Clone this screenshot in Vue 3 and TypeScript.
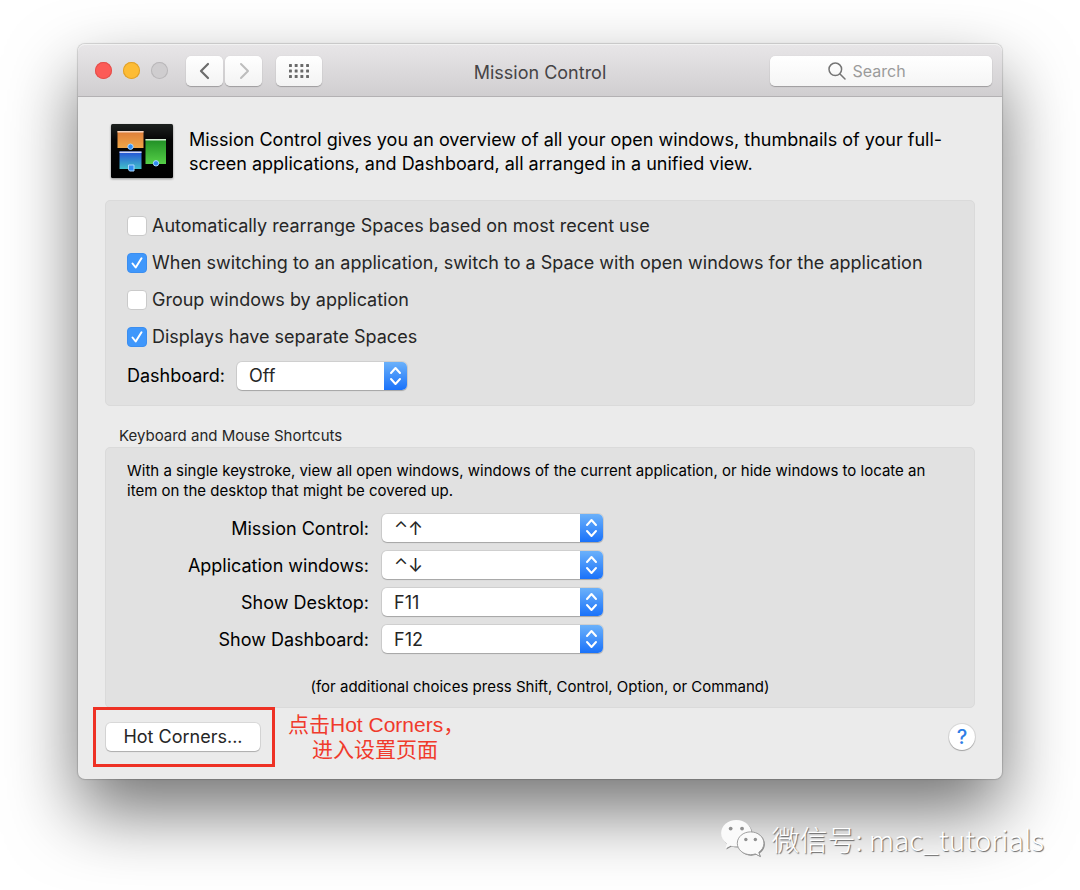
<script setup lang="ts">
import { reactive, ref } from 'vue'

interface Choice {
  id: string
  label: string
  checked: boolean
}

interface Shortcut {
  id: string
  label: string
  value: string
}

const choices = reactive<Choice[]>([
  { id: 'rearrange', label: 'Automatically rearrange Spaces based on most recent use', checked: false },
  { id: 'switching', label: 'When switching to an application, switch to a Space with open windows for the application', checked: true },
  { id: 'group', label: 'Group windows by application', checked: false },
  { id: 'displays', label: 'Displays have separate Spaces', checked: true },
])

const dashboard = ref('Off')
const dashboardModes = ['Off', 'As Space', 'As Overlay']

const shortcuts = reactive<Shortcut[]>([
  { id: 'mission', label: 'Mission Control:', value: '⌃↑' },
  { id: 'windows', label: 'Application windows:', value: '⌃↓' },
  { id: 'desktop', label: 'Show Desktop:', value: 'F11' },
  { id: 'show-dashboard', label: 'Show Dashboard:', value: 'F12' },
])
const keys = ['⌃↑', '⌃↓', 'F11', 'F12']

const query = ref('')
</script>

<template>
  <div class="desktop">
    <main class="window">
      <header class="titlebar">
        <div class="lights">
          <button class="light close" aria-label="Close"></button>
          <button class="light minimize" aria-label="Minimize"></button>
          <button class="light zoom" aria-label="Zoom" disabled></button>
        </div>
        <nav class="nav">
          <button class="tool" aria-label="Back">
            <svg width="12" height="18" viewBox="0 0 12 18"><path d="M9 2 2 9l7 7" fill="none" stroke="#6c6c6c" stroke-width="2.200" stroke-linecap="round" stroke-linejoin="round" /></svg>
          </button>
          <button class="tool" aria-label="Forward">
            <svg width="12" height="18" viewBox="0 0 12 18"><path d="m3 2 7 7-7 7" fill="none" stroke="#bdbdbd" stroke-width="2" stroke-linecap="round" stroke-linejoin="round" /></svg>
          </button>
        </nav>
        <button class="tool grid-tool" aria-label="Show All">
          <svg width="20" height="14" viewBox="0 0 20 14" fill="#6a6a6a">
            <template v-for="row in 3" :key="row">
              <rect v-for="col in 4" :key="col" :x="(col - 1) * 5.700" :y="(row - 1) * 5.500" width="2.900" height="2.900" rx="0.500" />
            </template>
          </svg>
        </button>
        <h1 class="title">Mission Control</h1>
        <label class="search">
          <svg width="18" height="18" viewBox="0 0 18 18" fill="none" stroke="#757575" stroke-width="1.500" stroke-linecap="round"><circle cx="7.300" cy="7.300" r="6.300" /><path d="m12 12 5 5" /></svg>
          <input v-model="query" type="text" placeholder="Search" aria-label="Search" />
        </label>
      </header>

      <div class="content">
        <section class="intro">
          <svg class="app-icon" width="62" height="55" viewBox="0 0 62 55" aria-hidden="true">
            <defs>
              <linearGradient id="orange" x1="0" y1="0" x2="0" y2="1"><stop offset="0" stop-color="#dd7d39" /><stop offset="1" stop-color="#efa647" /></linearGradient>
              <linearGradient id="blue" x1="0" y1="0" x2="0" y2="1"><stop offset="0" stop-color="#2450d6" /><stop offset="1" stop-color="#42bfc9" /></linearGradient>
              <linearGradient id="green" x1="0" y1="0" x2="0" y2="1"><stop offset="0" stop-color="#1f8d24" /><stop offset="1" stop-color="#55cf47" /></linearGradient>
              <linearGradient id="night" x1="0" y1="0" x2="0" y2="1"><stop offset="0" stop-color="#1d211f" /><stop offset="0.300" stop-color="#050505" /><stop offset="1" stop-color="#000" /></linearGradient>
            </defs>
            <rect width="62" height="54" rx="1.500" fill="url(#night)" />
            <rect x="6.500" y="7" width="26" height="17" fill="url(#orange)" />
            <rect x="6.500" y="7" width="26" height="1.500" fill="#f3d3be" />
            <rect x="8.500" y="27.500" width="22" height="17.500" fill="url(#blue)" />
            <rect x="8.500" y="27.500" width="22" height="1.500" fill="#d3d9f5" />
            <rect x="34.500" y="15" width="20.500" height="25" fill="url(#green)" />
            <rect x="34.500" y="15" width="20.500" height="1.500" fill="#d6efd6" />
            <g fill="#318df2" stroke="#a9d8ff" stroke-width="1">
              <circle cx="19.500" cy="22.700" r="2.700" />
              <circle cx="45" cy="39.300" r="2.700" />
              <path d="M17.500 41H23v6h-4.500l-1-1.500z" />
            </g>
          </svg>
          <p>Mission Control gives you an overview of all your open windows, thumbnails of your full-<br />screen applications, and Dashboard, all arranged in a unified view.</p>
        </section>

        <section class="group options">
          <label v-for="choice in choices" :key="choice.id" class="choice">
            <span class="tick">
              <input v-model="choice.checked" type="checkbox" />
              <svg v-if="choice.checked" width="20" height="20" viewBox="0 0 20 20"><path d="m5.500 10.500 3.200 4 5.800-9.200" fill="none" stroke="#fff" stroke-width="2" stroke-linecap="round" stroke-linejoin="round" /></svg>
            </span>
            {{ choice.label }}
          </label>
          <div class="dashboard">
            <label for="dashboard">Dashboard:</label>
            <span class="popup">
              <select id="dashboard" v-model="dashboard">
                <option v-for="mode in dashboardModes" :key="mode">{{ mode }}</option>
              </select>
              <svg width="23" height="28" viewBox="0 0 23 28" aria-hidden="true"><path d="m7 11 4.500-5 4.500 5M7 17l4.500 5 4.500-5" /></svg>
            </span>
          </div>
        </section>

        <h2>Keyboard and Mouse Shortcuts</h2>
        <section class="group shortcuts">
          <p>With a single keystroke, view all open windows, windows of the current application, or hide windows to locate an<br />item on the desktop that might be covered up.</p>
          <div class="fields">
            <template v-for="shortcut in shortcuts" :key="shortcut.id">
              <label :for="shortcut.id">{{ shortcut.label }}</label>
              <span class="popup">
                <select :id="shortcut.id" v-model="shortcut.value">
                  <option v-for="key in keys" :key="key">{{ key }}</option>
                </select>
                <svg width="23" height="28" viewBox="0 0 23 28" aria-hidden="true"><path d="m7 11 4.500-5 4.500 5M7 17l4.500 5 4.500-5" /></svg>
              </span>
            </template>
          </div>
          <p class="hint">(for additional choices press Shift, Control, Option, or Command)</p>
        </section>

        <footer class="actions">
          <div class="marked">
            <button class="corners">Hot Corners...</button>
          </div>
          <p class="note" lang="zh">点击Hot Corners，<span>进入设置页面</span></p>
          <button class="help" aria-label="Help">?</button>
        </footer>
      </div>
    </main>

    <div class="watermark" lang="zh">
      <svg width="44" height="38" viewBox="0 0 46 40" aria-hidden="true">
        <g class="bubble-shade" transform="translate(1 1)">
          <path d="M16 0C7 0 0 6 0 14c0 4.500 2.200 8.300 6 11l-1.500 5 5.500-3c2 .6 4 1 6 1 9 0 16-6 16-14S25 0 16 0z" />
          <path d="M31 12.500c-7.700 0-14 5.200-14 12s6.300 12 14 12c1.800 0 3.500-.3 5-.8l5 2.600-1.400-4.300c3.300-2.200 5.400-5.600 5.400-9.500 0-6.800-6.300-12-14-12z" />
        </g>
        <path class="bubble" d="M16 0C7 0 0 6 0 14c0 4.500 2.200 8.300 6 11l-1.500 5 5.500-3c2 .6 4 1 6 1 9 0 16-6 16-14S25 0 16 0z" />
        <path class="bubble edge" d="M31 12.500c-7.700 0-14 5.200-14 12s6.300 12 14 12c1.800 0 3.500-.3 5-.8l5 2.600-1.400-4.300c3.300-2.200 5.400-5.600 5.400-9.500 0-6.800-6.300-12-14-12z" />
        <g fill="#909090"><circle cx="10" cy="9" r="2" /><circle cx="22" cy="9" r="2" /><circle cx="26" cy="20.500" r="1.800" /><circle cx="36" cy="20.500" r="1.800" /></g>
      </svg>
      <span>微信号: mac_tutorials</span>
    </div>
  </div>
</template>

<style>
body {
  margin: 0;
  background: #fff;
}
</style>

<style scoped>
.desktop {
  box-sizing: border-box;
  min-height: 100vh;
  padding: 44px 78px 28px;
  overflow: hidden;
  font-family: Inter, "Noto Sans CJK SC", sans-serif;
  font-size: 18px;
  line-height: 24px;
  color: #000;
}
button,
input,
select {
  margin: 0;
  padding: 0;
  border: 0;
  font: inherit;
  color: inherit;
}
p,
h1,
h2 {
  margin: 0;
}
.window {
  border-radius: 7px;
  background: #ebebeb;
  box-shadow: 0 0 1px 1px rgba(0, 0, 0, 0.15), 0 33px 70px rgba(0, 0, 0, 0.55);
}
.titlebar {
  position: relative;
  display: flex;
  align-items: center;
  box-sizing: border-box;
  height: 53px;
  padding: 1px 10px 0 17px;
  border-bottom: 1px solid #b3b1b3;
  border-radius: 7px 7px 0 0;
  background: linear-gradient(#e8e6e8, #d0ced0);
  box-shadow: inset 0 1px #f2f2f2;
}
.lights {
  display: flex;
  gap: 11px;
}
.light {
  width: 17px;
  height: 17px;
  border-radius: 50%;
}
.close {
  background: #fc5b57;
  box-shadow: inset 0 0 0 1px #e2504c;
}
.minimize {
  background: #fdbc35;
  box-shadow: inset 0 0 0 1px #dfa02c;
}
.zoom {
  background: #cfcdcf;
  box-shadow: inset 0 0 0 1px #b9b7b9;
}
.nav {
  display: flex;
  gap: 2px;
  margin: 0 14px 0 18px;
}
.tool {
  display: flex;
  align-items: center;
  justify-content: center;
  width: 37px;
  height: 30px;
  border-radius: 5px;
  background: linear-gradient(#fff, #f3f3f3);
  box-shadow: 0 1px 1px rgba(0, 0, 0, 0.25), 0 0 1px rgba(0, 0, 0, 0.15);
}
.grid-tool {
  width: 46px;
}
.title {
  position: absolute;
  left: 50%;
  transform: translateX(-50%);
  padding-top: 4px;
  font-size: 18px;
  font-weight: 400;
  color: #464446;
}
.search {
  display: flex;
  align-items: center;
  justify-content: center;
  gap: 7px;
  box-sizing: border-box;
  width: 222px;
  height: 30px;
  margin-left: auto;
  padding-right: 24px;
  border-radius: 5px;
  background: linear-gradient(#fff, #f5f5f5);
  box-shadow: 0 1px 1px rgba(0, 0, 0, 0.25), 0 0 1px rgba(0, 0, 0, 0.15);
}
.search input {
  width: 58px;
  field-sizing: content;
  background: none;
  outline: 0;
  font-size: 16px;
}
.search input::placeholder {
  color: #9b9b9b;
  opacity: 1;
}
.content {
  padding: 27px 27px 17px;
}
.intro {
  display: flex;
  align-items: center;
  gap: 16px;
  padding-left: 6px;
}
.app-icon {
  flex: none;
  filter: drop-shadow(0 1px 1px rgba(0, 0, 0, 0.4));
}
.group {
  border: 1px solid #dadada;
  border-radius: 5px;
  background: #e1e1e1;
}
.options {
  display: flex;
  flex-direction: column;
  gap: 13px;
  margin-top: 21px;
  padding: 13px 21px 15px;
}
.choice {
  display: flex;
  align-items: center;
  gap: 5px;
  color: #262626;
}
.tick {
  position: relative;
  display: flex;
}
.tick input {
  width: 20px;
  height: 20px;
  appearance: none;
  border: 1px solid #cacaca;
  border-radius: 4px;
  background: #fff;
}
.tick input:checked {
  border-color: #3b8ef0;
  background: #3f97fb;
}
.tick svg {
  position: absolute;
  inset: 0;
  pointer-events: none;
}
.dashboard {
  display: flex;
  align-items: center;
  gap: 12px;
}
.popup {
  position: relative;
  display: flex;
  width: 170px;
}
.popup select {
  width: 100%;
  height: 28px;
  padding: 0 30px 0 12px;
  appearance: none;
  border-radius: 5px;
  background: #fff;
  box-shadow: 0 1px 1px rgba(0, 0, 0, 0.2), 0 0 0 1px rgba(0, 0, 0, 0.08);
  color: #262626;
}
.popup svg {
  position: absolute;
  top: 0;
  right: 0;
  border-radius: 0 5px 5px 0;
  background: linear-gradient(#6bb1fa, #1a72fa);
  fill: none;
  stroke: #fff;
  stroke-width: 2;
  stroke-linecap: round;
  stroke-linejoin: round;
  pointer-events: none;
}
h2 {
  margin: 19px 0 0 14px;
  font-size: 15px;
  font-weight: 400;
  line-height: 22px;
  color: #262626;
}
.shortcuts {
  padding: 13px 21px 10px;
  font-size: 15px;
  line-height: 20px;
}
.fields {
  display: grid;
  grid-template-columns: 242px 221px;
  gap: 9px 13px;
  margin-top: 13px;
  font-size: 18px;
  line-height: 30px;
}
.fields label {
  height: 28px;
  text-align: right;
}
.fields .popup {
  width: 221px;
}
.hint {
  margin-top: 24px;
  text-align: center;
}
.actions {
  display: flex;
  align-items: center;
  margin-top: 4px;
  padding-left: 1px;
}
.marked {
  position: relative;
}
.marked::after {
  position: absolute;
  inset: -16px -15px -16px -13px;
  border: 3px solid #ee3124;
  content: "";
  pointer-events: none;
}
.corners {
  display: block;
  width: 154px;
  height: 28px;
  border-radius: 5px;
  background: #fff;
  box-shadow: 0 1px 1px rgba(0, 0, 0, 0.2), 0 0 0 1px rgba(0, 0, 0, 0.08);
  color: #262626;
}
.note {
  margin-left: 28px;
  font-family: "Liberation Sans", "Noto Sans CJK SC", sans-serif;
  font-size: 21px;
  line-height: 25px;
  color: #f03a2c;
}
.note span {
  display: block;
  padding-left: 24px;
}
.help {
  width: 26px;
  height: 26px;
  margin-left: auto;
  border-radius: 50%;
  background: #fff;
  box-shadow: 0 1px 1px rgba(0, 0, 0, 0.25), 0 0 0 1px rgba(0, 0, 0, 0.08);
  font-size: 20px;
  font-weight: 500;
  color: #2f7ee6;
}
.watermark {
  position: relative;
  display: flex;
  align-items: center;
  justify-content: flex-end;
  gap: 7px;
  margin: 40px -42px 0 0;
  font-family: "Noto Sans CJK SC", sans-serif;
  font-size: 28px;
  font-weight: 300;
  line-height: 40px;
  color: #fff;
  text-shadow: 1px 1px 1px #666;
}
.bubble {
  fill: #fafafa;
}
.edge {
  stroke: #9a9a9a;
  stroke-width: 1;
}
.bubble-shade {
  fill: #8a8a8a;
}
</style>
